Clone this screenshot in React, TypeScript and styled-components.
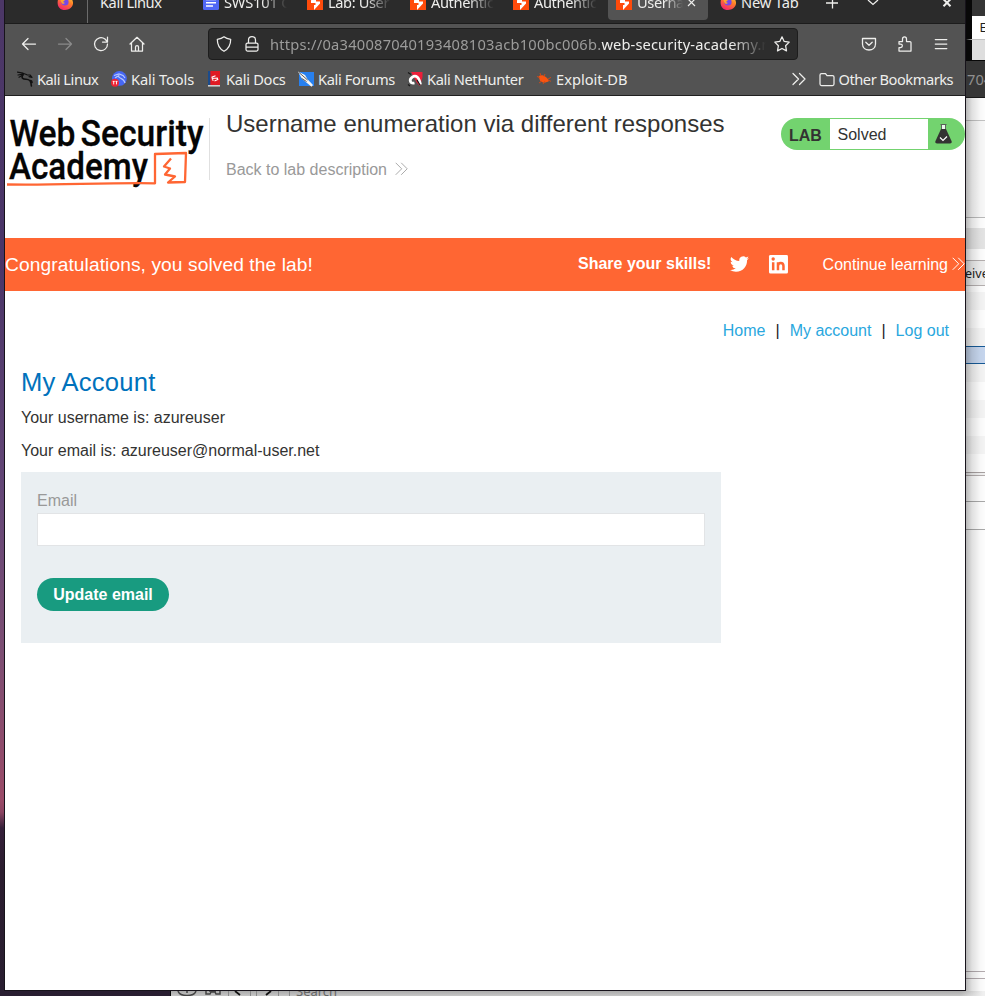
import React from "react";
import styled, { createGlobalStyle } from "styled-components";

const ui = `"Noto Sans", sans-serif`;
const body = `"Liberation Sans", Arial, sans-serif`;

const Global = createGlobalStyle`
  * { box-sizing: border-box; }
  body { margin: 0; overflow: hidden; }
`;

const Desktop = styled.div`
  position: relative;
  width: 985px;
  height: 996px;
  overflow: hidden;
  background: linear-gradient(#4c3767 0, #4a3568 260px, #654777 500px, #7c4e73 650px, #9a4b68 800px, #8c4462 812px, #35203a 828px, #2b1d2f 870px, #291e31 996px);
`;

/* Windows behind the browser */
const SideWindow = styled.div`
  position: absolute;
  left: 966px;
  top: 0;
  width: 19px;
  height: 991px;
  display: flex;
  flex-direction: column;
  overflow: hidden;
  font-family: ${ui};
  background: #fff;
`;
const Band = styled.div<{ h: number; bg?: string; line?: string; inset?: boolean }>`
  flex: none;
  height: ${(p) => p.h}px;
  background: ${(p) => p.bg ?? "#fff"};
  border-bottom: ${(p) => (p.line ? `1px solid ${p.line}` : "0")};
  border-left: ${(p) => (p.inset ? "6px solid #080808" : "0")};
  display: flex;
  align-items: center;
  white-space: nowrap;
  overflow: hidden;
`;
const BandText = styled.span<{ c: string; size: number; shift: number; bold?: boolean }>`
  color: ${(p) => p.c};
  font-size: ${(p) => p.size}px;
  font-weight: ${(p) => (p.bold ? 700 : 400)};
  margin-left: ${(p) => p.shift}px;
`;
const Shade = styled.div`
  position: absolute;
  left: 966px;
  top: 98px;
  width: 19px;
  height: 893px;
  background: linear-gradient(90deg, rgba(0, 0, 0, 0.28), rgba(0, 0, 0, 0.12) 6px, rgba(0, 0, 0, 0.03) 14px, rgba(0, 0, 0, 0.01));
`;
const BottomWindow = styled.div`
  position: absolute;
  left: 170px;
  top: 991px;
  width: 815px;
  height: 5px;
  overflow: hidden;
  display: flex;
  align-items: flex-end;
  background: linear-gradient(90deg, transparent 790px, #f0f0f0 812px), linear-gradient(#aaa, #c6c6c6);
  border-left: 1px solid #080808;
  font: 13px/14px ${ui};
  color: #666;
`;
const BottomItem = styled.div<{ w: number; line?: boolean }>`
  width: ${(p) => p.w}px;
  height: 5px;
  flex: none;
  border-left: ${(p) => (p.line ? "1px solid #888" : "0")};
  & > svg { display: block; }
`;
const SearchHint = styled.div`
  height: 14px;
  margin: 0 0 -2px 6px;
  line-height: 14px;
`;

/* Browser window */
const Browser = styled.div`
  position: absolute;
  left: 4px;
  top: 0;
  width: 962px;
  height: 991px;
  border: solid #17131b;
  border-width: 0 1px 1px;
  background: #fff;
  overflow: hidden;
  display: flex;
  flex-direction: column;
`;
const TabBar = styled.div`
  flex: none;
  height: 24px;
  background: #2b2b2b;
  border-bottom: 1px solid #1c1c1c;
  display: flex;
  font: 14.67px/20px ${ui};
  color: #eeeeec;
`;
const Tab = styled.div<{ w: number; pad: number; active?: boolean; divider?: boolean }>`
  flex: none;
  width: ${(p) => p.w}px;
  height: ${(p) => (p.divider ? 23 : 20)}px;
  padding-left: ${(p) => p.pad}px;
  display: flex;
  border-right: ${(p) => (p.divider ? "1px solid #6b6b6b" : "0")};
  border-radius: ${(p) => (p.active ? "0 0 4px 4px" : "0")};
  background: ${(p) => (p.active ? "#535353" : "transparent")};
  & > svg { flex: none; margin-top: -6px; }
`;
const TabLabel = styled.span<{ w?: number; track?: number }>`
  flex: none;
  width: ${(p) => (p.w ? `${p.w}px` : "auto")};
  margin: -8px 0 0 5px;
  height: 20px;
  overflow: hidden;
  white-space: nowrap;
  letter-spacing: ${(p) => p.track ?? -0.4}px;
  mask-image: ${(p) => (p.w ? "linear-gradient(90deg, #000 60%, transparent)" : "none")};
`;
const TabTools = styled.div`
  flex: 1;
  height: 12px;
  & > svg { display: block; }
`;
const NavBar = styled.div`
  flex: none;
  height: 40px;
  background: #535353;
  display: flex;
  align-items: center;
`;
const NavIcons = styled.div<{ pad: number }>`
  display: flex;
  align-items: center;
  gap: 20px;
  margin-left: ${(p) => p.pad}px;
`;
const UrlBox = styled.div`
  flex: none;
  width: 590px;
  height: 32px;
  margin-left: 63px;
  background: #2d2d2d;
  border: 1px solid #1d1d1d;
  border-radius: 4px;
  display: flex;
  align-items: center;
  padding-left: 7px;
  gap: 12px;
`;
const Url = styled.div`
  width: 496px;
  margin: 0 -4px 0 -2px;
  overflow: hidden;
  white-space: nowrap;
  font: 14.67px/22px ${ui};
  letter-spacing: 0.24px;
  color: #9c9c9b;
  mask-image: linear-gradient(90deg, #000 93%, transparent);
  b { font-weight: 400; letter-spacing: 0.12px; color: #eeeeec; }
`;
const Bookmarks = styled.div`
  flex: none;
  height: 32px;
  background: #535353;
  border-bottom: 1px solid #202020;
  display: flex;
  align-items: center;
  padding: 0 12px 1px;
  gap: 12px;
  font: 14.67px/20px ${ui};
  color: #eeeeec;
  white-space: nowrap;
`;
const Bookmark = styled.div<{ w: number; track: number }>`
  display: flex;
  align-items: center;
  gap: 4px;
  width: ${(p) => p.w}px;
  letter-spacing: ${(p) => p.track}px;
  & > svg { flex: none; }
`;
const Spacer = styled.div`flex: 1;`;

/* Page */
const Page = styled.div`
  width: 960px;
  font: 16px/20px ${body};
  color: #333332;
`;
const Header = styled.header`
  height: 142px;
  display: flex;
`;
const LogoCell = styled.div`
  width: 205px;
  height: 62px;
  margin-top: 22px;
  border-right: 1px solid #e0e0e0;
  & > svg { display: block; overflow: visible; }
`;
const HeadText = styled.div`
  width: 571px;
  padding: 12px 0 0 16px;
`;
const Title = styled.h2`
  margin: 0;
  font: 24px/32px ${body};
  white-space: nowrap;
`;
const Back = styled.a`
  display: flex;
  align-items: center;
  gap: 8px;
  margin-top: 20px;
  color: #999;
  & > svg { margin-top: -2px; }
`;
const LabBadge = styled.div`
  margin-top: 22px;
  width: 184px;
  height: 32px;
  border-radius: 16px;
  background: #73d36f;
  display: flex;
  align-items: center;
`;
const LabName = styled.b`
  width: 49px;
  padding: 3px 0 0 8px;
`;
const LabState = styled.span`
  width: 98px;
  height: 30px;
  padding-left: 7.5px;
  line-height: 31px;
  background: #fff;
  margin-right: 7px;
`;
const Banner = styled.div`
  height: 53px;
  background: #ff6633;
  color: #fff;
  display: flex;
  align-items: center;
  white-space: nowrap;
`;
const Congrats = styled.span`
  width: 573.5px;
  font-size: 19.2px;
  letter-spacing: 0.08px;
`;
const Share = styled.b`
  width: 152.5px;
  padding-bottom: 2px;
`;
const Twitter = styled.svg`margin-bottom: 2px;`;
const Continue = styled.a`
  display: flex;
  align-items: center;
  gap: 4px;
  margin-left: 33.3px;
  & > svg { margin-top: -1px; }
`;
const TopLinks = styled.nav`
  height: 78px;
  padding: 30px 16px 0 0;
  display: flex;
  justify-content: flex-end;
  gap: 10px;
  color: #222;
  a { color: #29a7de; }
`;
const Account = styled.main`padding: 0 16px;`;
const Heading = styled.h1`
  margin: 0;
  height: 39px;
  color: #0072bc;
  font: 25.6px/26px ${body};
  letter-spacing: 0.22px;
`;
const Info = styled.p`
  margin: 0;
  height: 33px;
`;
const Form = styled.form`
  width: 700px;
  height: 171px;
  margin-top: -2px;
  padding: 18px 16px;
  background: #eaeff2;
`;
const Label = styled.label`
  display: block;
  height: 23px;
  line-height: 21px;
  color: #999;
`;
const Field = styled.input`
  display: block;
  width: 668px;
  height: 33px;
  border: 1px solid #e2e4e6;
  background: #fff;
`;
const Update = styled.button`
  margin-top: 32px;
  width: 132px;
  height: 33px;
  padding: 0;
  border: 0;
  border-radius: 17px;
  background: #189b80;
  color: #fff;
  font: bold 16px/32px ${body};
`;

const Line = ({ d, c = "#eeeeec", w = 1.25 }: { d: string; c?: string; w?: number }) => (
  <svg width="16" height="16" viewBox="0 0 16 16" fill="none" stroke={c} strokeWidth={w} strokeLinejoin="round" strokeLinecap="round"><path d={d} /></svg>
);
const Burp = () => (
  <svg width="16" height="16" viewBox="0 0 16 16"><path fill="#ff4b0b" d="M0 0h16v16H0z" /><path fill="#fff" d="M8 0 4 6.5V9h4.5v2H7v5l6-6.5V7.5H9V6l2-3V0z" /></svg>
);
const Fox = () => (
  <svg width="16" height="16" viewBox="0 0 16 16">
    <defs><linearGradient id="fox" x1=".8" y1="0" x2=".3" y2="1"><stop offset="0" stopColor="#ffe23f" /><stop offset=".45" stopColor="#ff8027" /><stop offset="1" stopColor="#f3246d" /></linearGradient></defs>
    <path fill="url(#fox)" d="M1.500 4 3 2l2 2 4-4 2 3 3 1c5 6 0 12-6 12S-1 11 1.500 4z" /><circle cx="8" cy="8" r="3.600" fill="#7748e8" /><path d="M3 5c2-1 4 0 5 1L6 8l2 1-2 1C4 9 4 7 3 5z" fill="#ffa52c" />
  </svg>
);
const Doc = () => (
  <svg width="16" height="16" viewBox="0 0 16 16"><rect width="16" height="16" rx="1.5" fill="#5067f5" /><path d="M3 5.5h10M3 8.8h10M3 12.1h7" stroke="#fff" strokeWidth="1.5" /></svg>
);
const Dragon = () => (
  <svg width="16" height="16" viewBox="0 0 16 16" fill="none" stroke="#111" strokeLinecap="round" strokeLinejoin="round">
    <path strokeWidth="1.2" d="M.5 1.2 6 2.2M1 4l5-.8M2 6.2 6 4M6 2.2l4 1.6 3 .2 2 2.4-3-.7" /><path strokeWidth="1.6" d="M6 3.6C3.8 7 6 8.2 9 8.2c4 0 5 2.3 5.4 6.8M12.5 9.5c2.2-.3 2.4 1 2.5 2" />
  </svg>
);
const Tools = () => (
  <svg width="16" height="16" viewBox="0 0 16 16"><circle cx="8.4" cy="7.4" r="7.4" fill="#4667f3" /><path d="M3 4.5 8 3l4 1.5L14 7M8 4C6 8 13 6 14 12M4 7l3-2" fill="none" stroke="#b9c9ff" strokeWidth="1.2" /><circle cx="4" cy="11.7" r="4" fill="#ef2534" /><path d="M1.7 10.4h2M2.7 10.4v3M4.5 10.4h2M5.5 10.4v3" stroke="#fff" strokeWidth=".9" /></svg>
);
const Docs = () => (
  <svg width="16" height="16" viewBox="0 0 16 16"><path fill="#e01a23" d="M2 0h12v15H2z" /><path fill="#1c4c8c" d="M2 0h2.3v15H2z" /><path fill="#cfcfcf" d="M2 14h12v1.6H2z" /><path d="M9.5 4.8 6 6.2l.3 1.3 5-.5.5 1.5L8.5 10M6 8.5l1.5 1" fill="none" stroke="#fff" strokeWidth="1.100" /></svg>
);
const Forums = () => (
  <svg width="16" height="16" viewBox="0 0 16 16"><path d="M1 1h15v14H1z" fill="#2780ef" /><path d="M0 .5 7 4l2.5 4.2L15 14l-1.5 1.7-6-5L4 8z" fill="#f4f4f4" /><path d="M1 1.5 9.6 9M3.6 7.4l5 3.2" stroke="#333" strokeWidth=".8" /></svg>
);
const Hunter = () => (
  <svg width="16" height="16" viewBox="0 0 16 16"><path fill="#ed1e39" d="M4 1h11.5v5L13 15l-3-3z" /><path d="M13.5 13.5C12 6 9 3.5 5 6.3 2 8.5 3 13 7.5 12" fill="none" stroke="#fff" strokeWidth="2.8" /><path d="M1 1.5 4 3.5M1 13.5 3 15M10 9l3 5" stroke="#191919" strokeWidth="1.2" /></svg>
);
const Bug = () => (
  <svg width="16" height="16" viewBox="0 0 16 16"><path d="M2.5 5.5C6 2.5 11 6 13 10c-3 2-7 2.2-9-.5z" fill="#f95410" /><path d="M1 5.4 4 7M5 5 4 2M8 5.5 9 3M12 8l3-1.6M12 9l3 1.3M6 10l-3 2M9 10l-2 3" stroke="#d64a14" strokeWidth=".9" /></svg>
);
const Chevrons = ({ c }: { c: string }) => (
  <svg width="13" height="14" viewBox="0 0 13 14" fill="none" stroke={c} strokeWidth="1"><path d="m.7.8 6 6-6 6M6.2.8l6 6-6 6" /></svg>
);

const rows: [number, string, string?][] = [
  [23, "#fff", "#c4c4c4"], [97, "#fafafa", "#bbb"], [10, "#fff"], [21, "#e6e6e6"], [12, "#fff", "#b6b0b0"],
];
const stripes: [number, string, string?][] = [
  [6, "#fff"], [18, "#f6f6f6"], [18, "#fff"], [19, "#f6f6f6", "#175b98"], [17, "#c8d8f0", "#175b98"], [18, "#f6f6f6"], [18, "#fff"],
  [18, "#f6f6f6"], [18, "#fff"], [18, "#f6f6f6"], [19, "#fff", "#a9a2a2"], [3, "#f3f3f3", "#b5aeae"], [26, "#fff", "#aaa"],
  [28, "#fff", "#aaa"], [442, "#fff", "#b5adb0"], [7, "#fff", "#b5adb0"],
];

export default function App() {
  return (
    <Desktop>
      <Global />
      <SideWindow>
        <Band h={16} bg="#353535" inset />
        <Band h={24} line="#c2c2c2" inset><BandText c="#202020" size={12.5} shift={7.5}>Ed</BandText></Band>
        <Band h={21} bg="#dedede" line="#080808" inset />
        <Band h={37} bg="#363636" line="#191919"><BandText c="#8f8f8f" size={14.67} shift={1}>704</BandText></Band>
        {rows.map(([h, bg, line], i) => <Band key={i} h={h} bg={bg} line={line} />)}
        <Band h={25} bg="#f0f0f0" line="#b6b0b0"><BandText c="#222" size={12.5} shift={-1}>eive</BandText></Band>
        {stripes.map(([h, bg, line], i) => <Band key={i} h={h} bg={bg} line={line} />)}
      </SideWindow>
      <Shade />
      <BottomWindow>
        <BottomItem w={57}><svg width="55" height="5" viewBox="0 0 55 5" fill="none" stroke="#444" strokeWidth="1.5"><path d="M7 0c2 6 16 6 18 0M15 1h2M35 0v3h4l1-2h4l1 2h4V0M38 0h7" /></svg></BottomItem>
        <BottomItem w={22} line><svg width="20" height="5"><path d="m6 0 5 4" stroke="#111" strokeWidth="1.8" /></svg></BottomItem>
        <BottomItem w={6} line />
        <BottomItem w={22} line><svg width="20" height="5"><path d="m14 0-5 4" stroke="#111" strokeWidth="1.8" /></svg></BottomItem>
        <BottomItem w={11} line />
        <BottomItem w={1} line />
        <SearchHint>Search</SearchHint>
      </BottomWindow>

      <Browser>
        <TabBar>
          <Tab w={83} pad={52} divider><Fox /></Tab>
          <Tab w={107} pad={7}><TabLabel track={-0.45}>Kali Linux</TabLabel></Tab>
          <Tab w={104} pad={8}><Doc /><TabLabel w={63} track={-0.2}>SWS101 C</TabLabel></Tab>
          <Tab w={103} pad={8}><Burp /><TabLabel w={63}>Lab: User</TabLabel></Tab>
          <Tab w={103} pad={8}><Burp /><TabLabel w={63}>Authentica</TabLabel></Tab>
          <Tab w={103} pad={8}><Burp /><TabLabel w={63}>Authentica</TabLabel></Tab>
          <Tab w={100} pad={8} active><Burp /><TabLabel w={46}>Userna</TabLabel><svg width="20" height="20" fill="none" stroke="#eeeeec" strokeWidth="1.2"><path d="m5 5 7 7m0-7-7 7" /></svg></Tab>
          <Tab w={104} pad={12}><Fox /><TabLabel track={-0.15}>New Tab</TabLabel></Tab>
          <TabTools><svg width="150" height="12" fill="none" stroke="#eeeeec" strokeWidth="1.3"><path d="M14 3h12M20.5 0v8.5M56 0l5 4.5L66 0" /><path strokeWidth="2" d="m131.5-.8 7 7m0-7-7 7" /></svg></TabTools>
        </TabBar>
        <NavBar>
          <NavIcons pad={16}>
            <Line d="M1.5 8h13M7 2.5 1.5 8 7 13.5" />
            <Line c="#8b8b8b" d="M1.5 8h13M9 2.5 14.5 8 9 13.5" />
            <Line d="M14.5 8A6.5 6.5 0 1 1 12 3l2.2 2.5M14.500 1v5h-5" />
            <Line d="M1 8 8 1.3 15 8M2.5 7v8h11V7M6.5 15v-4c0-2 3-2 3 0v4" />
          </NavIcons>
          <UrlBox>
            <Line d="M8 .8C6 2.5 4 3 1.3 3.3c0 5 1 9 6.7 12 5.7-3 6.7-7 6.7-12C12 3 10 2.5 8 .8z" />
            <Line d="M3.5 7h9c1 0 1.5.5 1.5 1.5v5c0 1-.5 1.5-1.5 1.5h-9c-1 0-1.5-.5-1.5-1.5v-5C2 7.5 2.5 7 3.5 7zM4.5 7V4c0-4.5 7-4.5 7 0v3M2 11h12" />
            <Url>https://0a340087040193408103acb100bc006b.<b>web-security-academy.net</b></Url>
            <Line d="m8 .8 2.2 4.6 5 .7-3.6 3.6.9 5.2L8 12.5l-4.5 2.4.9-5.2L.8 6.100l5-.7z" />
          </UrlBox>
          <NavIcons pad={63}>
            <Line d="M1.5 2.5h13V8c0 8-13 8-13 0zM4.8 6.3 8 9.3l3.2-3" w={1.3} />
            <Line d="M2 5.5h3.5V3c0-3 4-3 4 0v2.5H13c1 0 1 .5 1 1V15H2v-3.5h1.5c2.5 0 2.5-3.5 0-3.5H2z" />
            <Line d="M2.3 3.5h11.5M2.3 8h11.5M2.3 12.5h11.5" />
          </NavIcons>
        </NavBar>
        <Bookmarks>
          <Bookmark w={82} track={-0.46}><Dragon />Kali Linux</Bookmark>
          <Bookmark w={83} track={-0.12}><Tools />Kali Tools</Bookmark>
          <Bookmark w={80} track={-0.3}><Docs />Kali Docs</Bookmark>
          <Bookmark w={97} track={-0.36}><Forums />Kali Forums</Bookmark>
          <Bookmark w={117} track={-0.4}><Hunter />Kali NetHunter</Bookmark>
          <Bookmark w={92} track={0}><Bug />Exploit-DB</Bookmark>
          <Spacer />
          <Line d="m2 2.5 5.5 5.5L2 13.5M8.500 2.500 14 8l-5.500 5.500" />
          <Bookmark w={134.5} track={-0.48}><Line d="M1 4c0-1 .5-1.5 1.5-1.5h4L8 4.5h5.5c1 0 1.5.5 1.500 1.500v7c0 1-.5 1.500-1.500 1.500h-11C1.500 14.500 1 14 1 13z" />Other Bookmarks</Bookmark>
        </Bookmarks>

        <Page>
          <Header>
            <LogoCell>
              <svg width="204" height="70" viewBox="0 0 204 70">
                <g fill="#050505" stroke="#050505" strokeWidth=".3" fontFamily="Roboto, sans-serif" fontSize="37.5" fontWeight="500">
                  <text x="4.5" y="28" textLength="66" lengthAdjust="spacingAndGlyphs">Web</text>
                  <text x="75.5" y="28" textLength="123" lengthAdjust="spacingAndGlyphs">Security</text>
                  <text x="4" y="60.5" textLength="139" lengthAdjust="spacingAndGlyphs">Academy</text>
                </g>
                <path d="M2 66.500c48 1 97-2 148-1.200V36l31-1-1 29-17 .5 7-6-10-2 5-6-6-2 7-8" fill="none" stroke="#ff6633" strokeWidth="2.300" strokeLinejoin="round" />
              </svg>
            </LogoCell>
            <HeadText>
              <Title>Username enumeration via different responses</Title>
              <Back>Back to lab description <Chevrons c="#aaa" /></Back>
            </HeadText>
            <LabBadge>
              <LabName>LAB</LabName><LabState>Solved</LabState>
              <svg width="17" height="20" viewBox="0 0 17 20"><path d="M5.5.5h6M6.5 1v5h4V1" fill="#eaf8ea" stroke="#555" strokeWidth=".9" /><path d="M6 5h5l5.5 12c.6 1.5 0 2.5-1.5 2.5H2C.5 19.5-.1 18.5.5 17z" fill="#333332" /><path d="m5 13.5 3 3 4-4" fill="none" stroke="#fff" strokeWidth="1.2" /></svg>
            </LabBadge>
          </Header>
          <Banner>
            <Congrats>Congratulations, you solved the lab!</Congrats>
            <Share>Share your skills!</Share>
            <Twitter width="19" height="20" viewBox="0 0 24 24" fill="#fff"><path d="M23.95 4.57a10 10 0 0 1-2.82.77 4.96 4.96 0 0 0 2.16-2.72 9.9 9.9 0 0 1-3.12 1.19 4.92 4.92 0 0 0-8.38 4.48C7.69 8.09 4.07 6.13 1.64 3.16a4.92 4.92 0 0 0 1.52 6.57 4.9 4.9 0 0 1-2.23-.61v.06a4.92 4.92 0 0 0 3.95 4.82 5 5 0 0 1-2.21.09 4.94 4.94 0 0 0 4.6 3.42A9.87 9.87 0 0 1 0 19.54a14 14 0 0 0 7.55 2.21c9.05 0 14-7.5 14-13.99v-.63a9.94 9.94 0 0 0 2.4-2.56z" /></Twitter>
            <svg width="40" height="20" viewBox="-20 0 40 20"><rect x="0" y="0" width="19" height="18.5" rx="1.5" fill="#fff" /><path d="M4.2 7.2v8M9 7.2v8M9 11c0-4 5.5-4 5.5 0v4.2" fill="none" stroke="#ff6633" strokeWidth="2.5" /><circle cx="4.2" cy="4" r="1.7" fill="#ff6633" /></svg>
            <Continue>Continue learning <Chevrons c="#fff" /></Continue>
          </Banner>
          <TopLinks><a>Home</a><span>|</span><a>My account</a><span>|</span><a>Log out</a></TopLinks>
          <Account>
            <Heading>My Account</Heading>
            <Info>Your username is: azureuser</Info>
            <Info>Your email is: azureuser@normal-user.net</Info>
            <Form>
              <Label htmlFor="email">Email</Label>
              <Field id="email" />
              <Update type="button">Update email</Update>
            </Form>
          </Account>
        </Page>
      </Browser>
    </Desktop>
  );
}
